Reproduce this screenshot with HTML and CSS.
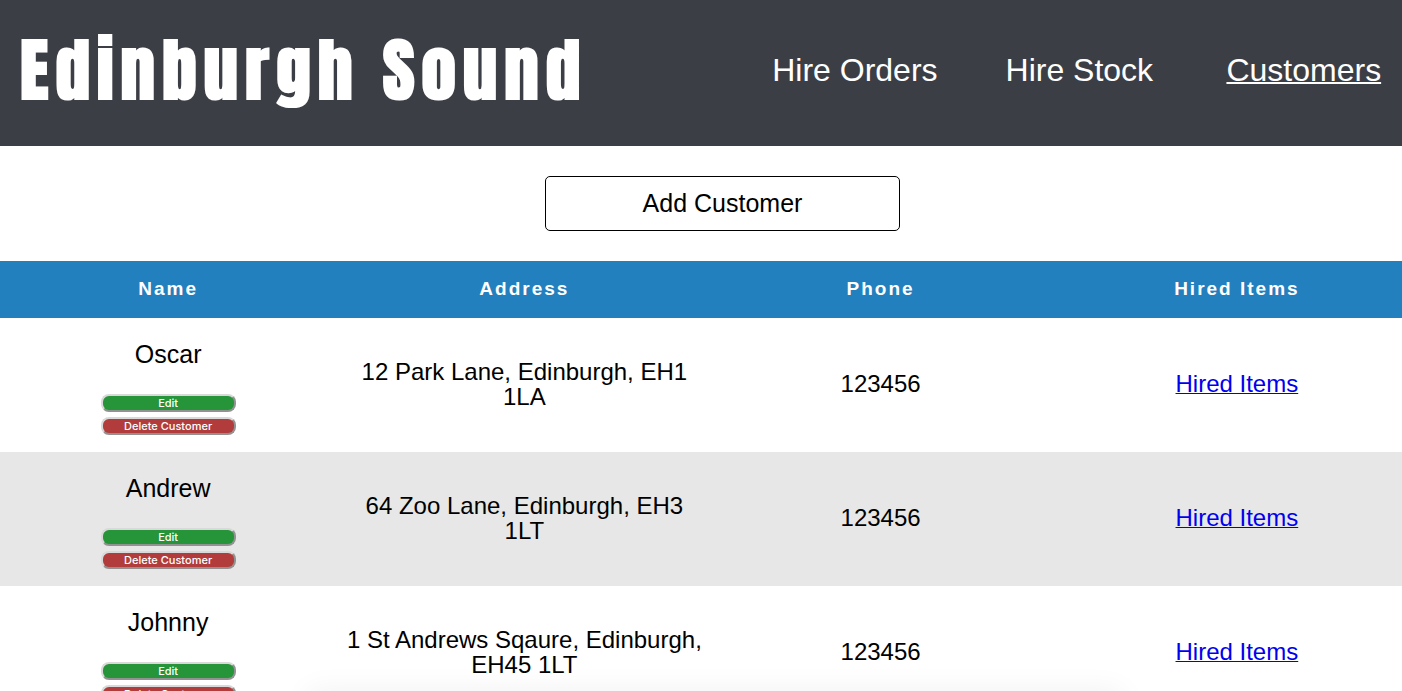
FILE: index.html
```
<!DOCTYPE html>
<html lang="en">
<head>
<meta charset="utf-8">
<meta name="viewport" content="width=device-width, initial-scale=1">
<title>Edinburgh Sound</title>
<link rel="stylesheet" href="styles.css">
</head>
<body>
<header class="site-header">
  <h1 class="brand">Edinburgh Sound</h1>
  <nav class="site-nav">
    <a class="nav-link" href="#orders">Hire Orders</a>
    <a class="nav-link" href="#stock">Hire Stock</a>
    <a class="nav-link nav-link-active" href="#customers">Customers</a>
  </nav>
</header>
<main class="content">
  <div class="toolbar"><button class="add-button" type="button">Add Customer</button></div>
  <table class="customers">
    <thead>
      <tr><th scope="col">Name</th><th scope="col">Address</th><th scope="col">Phone</th><th scope="col">Hired Items</th></tr>
    </thead>
    <tbody>
      <tr>
        <td><div class="customer"><span class="customer-name">Oscar</span><button class="action edit" type="button">Edit</button><button class="action delete" type="button">Delete Customer</button></div></td>
        <td>12 Park Lane, Edinburgh, EH1 1LA</td>
        <td>123456</td>
        <td><a href="#oscar">Hired Items</a></td>
      </tr>
      <tr>
        <td><div class="customer"><span class="customer-name">Andrew</span><button class="action edit" type="button">Edit</button><button class="action delete" type="button">Delete Customer</button></div></td>
        <td>64 Zoo Lane, Edinburgh, EH3 1LT</td>
        <td>123456</td>
        <td><a href="#andrew">Hired Items</a></td>
      </tr>
      <tr>
        <td><div class="customer"><span class="customer-name">Johnny</span><button class="action edit" type="button">Edit</button><button class="action delete" type="button">Delete Customer</button></div></td>
        <td>1 St Andrews Sqaure, Edinburgh, EH45 1LT</td>
        <td>123456</td>
        <td><a href="#johnny">Hired Items</a></td>
      </tr>
    </tbody>
  </table>
</main>
<div class="bottom-shade"></div>
</body>
</html>
```
FILE: styles.css
```
* {
  box-sizing: border-box;
}

body {
  margin: 0;
  background: #fff;
  color: #000;
  font-family: Helvetica, "Liberation Sans", Arial, sans-serif;
  font-size: 24px;
  line-height: 25px;
  overflow-x: hidden;
}

.site-header {
  display: flex;
  align-items: center;
  justify-content: space-between;
  height: 146px;
  padding: 0 0 6px 20px;
  background: #3c3e46;
  color: #fff;
  overflow: hidden;
}

.brand {
  margin: 0;
  font-family: Anton, Impact, "Liberation Sans", sans-serif;
  font-size: 69px;
  font-weight: bold;
  letter-spacing: 7px;
  line-height: 80px;
  white-space: nowrap;
}

.site-nav {
  display: grid;
  grid-template-columns: repeat(3, 1fr);
  flex: 0 0 calc(48% + 10px);
  margin-right: -14px;
  font-size: 32px;
  line-height: 40px;
  text-align: center;
  white-space: nowrap;
}

.nav-link {
  color: #fff;
  text-decoration: none;
}

.nav-link-active {
  text-decoration: underline;
  text-decoration-thickness: 2px;
}

.content {
  overflow: hidden;
}

.toolbar {
  display: flex;
  justify-content: center;
  padding: 30px 0 30px 43px;
}

.add-button {
  width: calc(26% + 2px);
  min-width: 200px;
  height: 55px;
  border: 1px solid #000;
  border-radius: 5px;
  background: #fff;
  color: #000;
  font-family: inherit;
  font-size: 25px;
}

.customers {
  width: calc(100% + 23px);
  margin-left: -10px;
  border-collapse: collapse;
  table-layout: fixed;
  text-align: center;
}

.customers th {
  height: 57px;
  padding: 0 0 2px;
  background: #2380be;
  color: #fff;
  font-size: 19px;
  letter-spacing: 2px;
}

.customers td {
  height: 134px;
  padding: 0 0 3px;
}

.customers tbody tr:nth-child(even) {
  background: #e7e7e7;
}

.customers a {
  color: #00e;
  text-decoration-thickness: 1px;
}

.customer {
  display: flex;
  flex-direction: column;
  align-items: center;
  gap: 5px;
  padding-top: 9px;
}

.customer-name {
  margin-bottom: 22px;
  font-size: 25px;
}

.action {
  width: 135px;
  height: 18px;
  padding: 0;
  border: 2px solid;
  border-color: #d9d9d9 #929292 #929292 #d9d9d9;
  border-radius: 8px;
  color: #fff;
  font-family: Inter, sans-serif;
  font-size: 11px;
  font-weight: 500;
  line-height: 14px;
}

.edit {
  background: #269438;
}

.delete {
  background: #b23c3c;
}

.bottom-shade {
  position: fixed;
  top: 100%;
  left: 22%;
  right: 20%;
  height: 40px;
  box-shadow: 0 0 30px rgba(0, 0, 0, 0.06);
}
```
